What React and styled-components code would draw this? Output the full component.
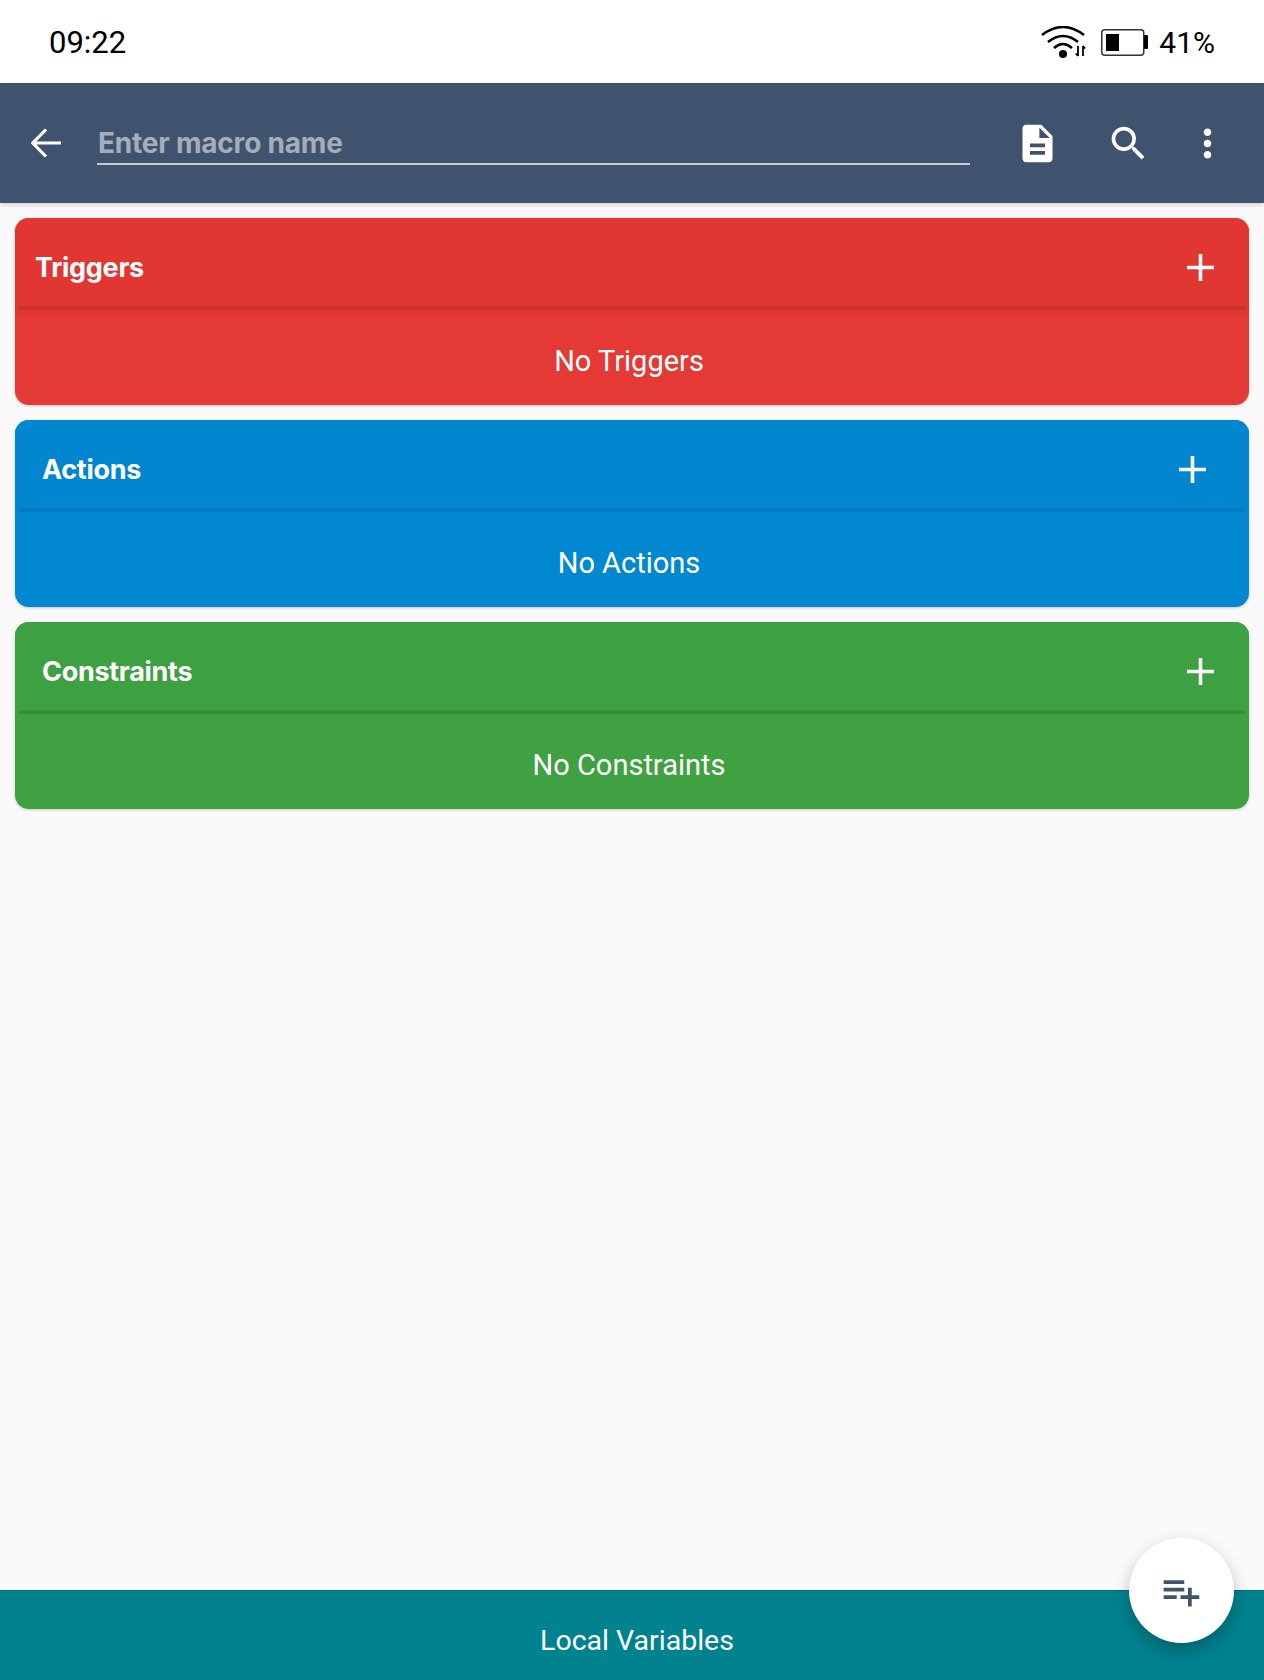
import React from "react";
import styled, { createGlobalStyle } from "styled-components";
import { MdDescription, MdSearch, MdMoreVert, MdPlaylistAdd } from "react-icons/md";

const GlobalStyle = createGlobalStyle`
  html, body {
    margin: 0;
    padding: 0;
    background: #fafafa;
    font-family: Roboto, "Liberation Sans", sans-serif;
  }
`;

const Page = styled.div`
  position: relative;
  display: flex;
  flex-direction: column;
  width: 1264px;
  height: 1680px;
  overflow: hidden;
`;

const StatusBar = styled.div`
  display: flex;
  align-items: center;
  justify-content: space-between;
  box-sizing: border-box;
  height: 83px;
  padding: 2px 49px 0;
  background: #fff;
  color: #000;
  font-size: 31px;
`;

const StatusRight = styled.div`
  display: flex;
  align-items: center;
  gap: 15px;
`;

const BatteryText = styled.span`
  margin-left: -4px;
  font-size: 30px;
`;

const Toolbar = styled.div`
  position: relative;
  z-index: 1;
  display: flex;
  align-items: center;
  height: 120px;
  padding-left: 31px;
  background: #40536e;
  color: #fff;
  box-shadow: 0 2px 5px rgba(0, 0, 0, 0.16);
`;

const NameField = styled.div`
  display: flex;
  align-items: flex-end;
  width: 873px;
  height: 44px;
  margin: 0 45px 0 36px;
  padding-left: 1px;
  padding-bottom: 2px;
  box-sizing: border-box;
  border-bottom: 2px solid #c5cbd4;
  color: #a3adbc;
  font-family: Inter, Roboto, sans-serif;
  font-size: 28px;
  font-weight: 700;
  line-height: 36px;
  letter-spacing: -0.2px;
`;

const ToolIcon = styled.span`
  display: flex;
  margin-left: ${(p) => p.$left}px;
  font-size: 45px;
`;

const Content = styled.div`
  flex: 1;
  display: flex;
  flex-direction: column;
  gap: 15px;
  padding: 15px 15px 0;
`;

const Card = styled.div`
  height: 187px;
  border-radius: 14px;
  overflow: hidden;
  background: ${(p) => p.$body};
  color: #fff;
  box-shadow: 0 1px 3px rgba(0, 0, 0, 0.2);
`;

const CardHeader = styled.div`
  height: 97px;
  background: ${(p) => p.$head};
`;

const HeaderRow = styled.div`
  display: flex;
  align-items: center;
  justify-content: space-between;
  box-sizing: border-box;
  height: 88px;
  padding-top: 11px;
  padding-left: ${(p) => p.$left}px;
  padding-right: ${(p) => p.$right}px;
`;

const CardTitle = styled.div`
  font-family: Inter, Roboto, sans-serif;
  font-size: 27px;
  font-weight: 700;
  letter-spacing: -0.3px;
`;

const HeaderLine = styled.div`
  height: 4px;
  margin: 0 4px;
  background: ${(p) => p.$line};
`;

const CardBody = styled.div`
  display: flex;
  align-items: center;
  justify-content: center;
  box-sizing: border-box;
  height: 90px;
  padding: 2px 6px 0 0;
  font-size: 29px;
`;

const BottomBar = styled.div`
  display: flex;
  align-items: center;
  justify-content: center;
  box-sizing: border-box;
  height: 90px;
  padding: 10px 0 0 10px;
  border-top: 1px solid #006c76;
  background: #00838f;
  color: #fff;
  font-size: 28.5px;
`;

const Fab = styled.div`
  position: absolute;
  left: 1129px;
  top: 1538px;
  display: flex;
  align-items: center;
  justify-content: center;
  box-sizing: border-box;
  width: 105px;
  height: 105px;
  padding: 1px 2px 0 0;
  border-radius: 50%;
  background: #fff;
  color: #40536e;
  font-size: 45px;
  box-shadow: 0 8px 18px rgba(0, 0, 0, 0.26);
`;

function WifiIcon() {
  return (
    <svg width="45" height="33" viewBox="0 0 45 33" fill="none" stroke="#000" strokeWidth="2.6">
      <path d="M1 9Q22 -7 43 9" />
      <path d="M7 16Q22 4 37 16" />
      <path d="M13 22Q22 14 31 22" />
      <circle cx="22" cy="28" r="4" fill="#000" stroke="none" />
      <path d="M37 20V30M34.8 27.5L37 30M42 30V20M42 20L44.2 22.5" strokeWidth="1.8" />
    </svg>
  );
}

function BatteryIcon() {
  return (
    <svg width="47" height="27" viewBox="0 0 47 27">
      <rect x="0.75" y="0.75" width="42" height="25.5" rx="3" fill="none" stroke="#333" strokeWidth="1.5" />
      <rect x="5" y="5" width="13" height="17" fill="#000" />
      <rect x="43" y="6" width="4" height="14" rx="1" fill="#000" />
    </svg>
  );
}

function BackIcon() {
  return (
    <svg width="30" height="30" viewBox="0 0 30 30" fill="none" stroke="#fff" strokeWidth="3.2">
      <path d="M30 15H2M15 1.5L1.8 15L15 28.5" />
    </svg>
  );
}

function PlusIcon() {
  return (
    <svg width="27" height="27" viewBox="0 0 27 27" fill="none" stroke="#fff" strokeWidth="3.6">
      <path d="M13.5 0V27M0 13.5H27" />
    </svg>
  );
}

const cards = [
  {
    title: "Triggers",
    empty: "No Triggers",
    head: "#e23633",
    body: "#e53935",
    line: "#cc2f2c",
    left: 20,
    right: 35,
  },
  {
    title: "Actions",
    empty: "No Actions",
    head: "#0286cf",
    body: "#0288d1",
    line: "#027cc0",
    left: 27,
    right: 43,
  },
  {
    title: "Constraints",
    empty: "No Constraints",
    head: "#3da041",
    body: "#3fa142",
    line: "#378e3a",
    left: 27,
    right: 35,
  },
];

export default function App() {
  return (
    <Page>
      <GlobalStyle />
      <StatusBar>
        <span>09:22</span>
        <StatusRight>
          <WifiIcon />
          <BatteryIcon />
          <BatteryText>41%</BatteryText>
        </StatusRight>
      </StatusBar>
      <Toolbar>
        <BackIcon />
        <NameField>Enter macro name</NameField>
        <ToolIcon $left={0}>
          <MdDescription />
        </ToolIcon>
        <ToolIcon $left={46}>
          <MdSearch />
        </ToolIcon>
        <ToolIcon $left={34}>
          <MdMoreVert />
        </ToolIcon>
      </Toolbar>
      <Content>
        {cards.map((c) => (
          <Card key={c.title} $body={c.body}>
            <CardHeader $head={c.head}>
              <HeaderRow $left={c.left} $right={c.right}>
                <CardTitle>{c.title}</CardTitle>
                <PlusIcon />
              </HeaderRow>
              <HeaderLine $line={c.line} />
            </CardHeader>
            <CardBody>{c.empty}</CardBody>
          </Card>
        ))}
      </Content>
      <BottomBar>Local Variables</BottomBar>
      <Fab>
        <MdPlaylistAdd />
      </Fab>
    </Page>
  );
}
